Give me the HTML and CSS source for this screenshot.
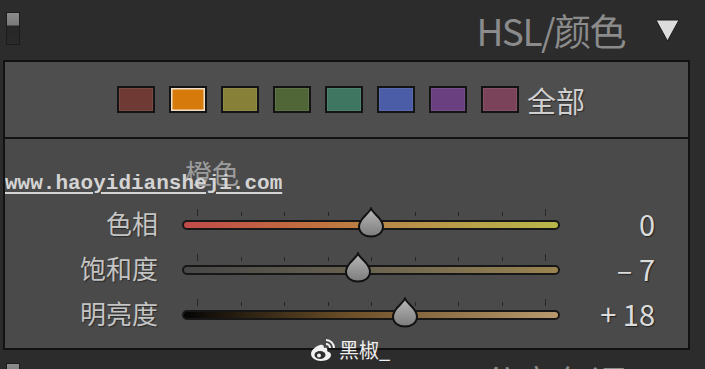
FILE: index.html
```html
<!DOCTYPE html>
<html lang="zh">
<head>
    <meta charset="UTF-8">
    <meta name="viewport" content="width=device-width, initial-scale=1.0">
    <title>HSL/颜色</title>
    <link rel="stylesheet" href="styles.css">
</head>
<body>

    <!-- Cabecera del panel -->
    <div class="cabecera">
        <span class="interruptor"></span>
        <h2 class="titulo">HSL/颜色</h2>
        <svg class="flecha" width="25" height="24" viewBox="0 0 25 24">
            <polygon points="1,2 24,2 12.5,23" fill="#dcdcdc" stroke="#1a1a1a" stroke-width="1"/>
        </svg>
    </div>

    <div class="panel">
        <!-- Selector de colores -->
        <div class="muestras">
            <span class="muestra" style="background:#6e3a33"></span>
            <span class="muestra activa" style="background:#d67a0c"></span>
            <span class="muestra" style="background:#878039"></span>
            <span class="muestra" style="background:#506636"></span>
            <span class="muestra" style="background:#3f7662"></span>
            <span class="muestra" style="background:#4b5da6"></span>
            <span class="muestra" style="background:#6a4081"></span>
            <span class="muestra" style="background:#7a4359"></span>
            <span class="todo">全部</span>
        </div>

        <!-- Ajustes del color elegido -->
        <div class="ajustes">
            <div class="grupo">橙色</div>
            <a class="marca" href="#">www.haoyidiansheji.com</a>

            <div class="fila">
                <span class="etiqueta">色相</span>
                <div class="deslizador">
                    <div class="marcas"><i></i><i></i><i></i><i></i><i></i><i></i><i></i><i></i><i></i></div>
                    <div class="pista tono"></div>
                    <svg class="tirador" style="left:50%" width="28" height="31" viewBox="0 0 28 31"><use href="#gota"/></svg>
                </div>
                <span class="valor">0</span>
            </div>
            <div class="fila">
                <span class="etiqueta">饱和度</span>
                <div class="deslizador">
                    <div class="marcas"><i></i><i></i><i></i><i></i><i></i><i></i><i></i><i></i><i></i></div>
                    <div class="pista saturacion"></div>
                    <svg class="tirador" style="left:46.5%" width="28" height="31" viewBox="0 0 28 31"><use href="#gota"/></svg>
                </div>
                <span class="valor">– 7</span>
            </div>
            <div class="fila">
                <span class="etiqueta">明亮度</span>
                <div class="deslizador">
                    <div class="marcas"><i></i><i></i><i></i><i></i><i></i><i></i><i></i><i></i><i></i></div>
                    <div class="pista luminancia"></div>
                    <svg class="tirador" style="left:59%" width="28" height="31" viewBox="0 0 28 31"><use href="#gota"/></svg>
                </div>
                <span class="valor">+ 18</span>
            </div>
        </div>

        <!-- Firma -->
        <div class="firma">
            <svg width="27" height="24" viewBox="0 0 27 24">
                <path d="M10 7 C4 9 1 13 1 16 C1 20 6 23 11 23 C17 23 21 20 21 17 C21 14 18 14 17 13 C18 11 17 9 14 10 C14 8 13 6 10 7 Z" fill="#f2f2f2"/>
                <ellipse cx="10" cy="17" rx="5.5" ry="4" fill="#2e2e2e"/>
                <circle cx="9" cy="17.5" r="2" fill="#f2f2f2"/>
                <path d="M16 6 A4 4 0 0 1 20 10" stroke="#f2f2f2" stroke-width="2" fill="none"/>
                <path d="M16 2 A8 8 0 0 1 24 10" stroke="#f2f2f2" stroke-width="2" fill="none"/>
            </svg>
            <span>黑椒_</span>
        </div>
    </div>

    <!-- Siguiente panel (cortado) -->
    <div class="cabecera siguiente">
        <span class="interruptor"></span>
        <h2 class="titulo">分离色调</h2>
    </div>

    <!-- Forma del tirador -->
    <svg width="0" height="0" class="oculto">
        <defs>
            <linearGradient id="gris" x1="0" y1="0" x2="0" y2="1">
                <stop offset="0" stop-color="#b8b8b8"/>
                <stop offset="1" stop-color="#7c7c7c"/>
            </linearGradient>
            <path id="gota" d="M14 1.5 C16 7 26 11 26 19.5 C26 26 20.5 29.5 14 29.5 C7.5 29.5 2 26 2 19.5 C2 11 12 7 14 1.5 Z" fill="url(#gris)" stroke="#111" stroke-width="2"/>
        </defs>
    </svg>

</body>
</html>
```

FILE: styles.css
```css
/* Estilos generales */
body {
    margin: 0;
    background-color: #2c2c2c;
    font-family: "Noto Sans CJK SC", "Noto Sans", sans-serif;
    height: 369px;
    overflow: hidden;
}
.oculto {
    position: absolute;
}
/* Cabecera */
.cabecera {
    height: 60px;
    display: flex;
    align-items: center;
    padding: 0 25px 0 6px;
}
.interruptor {
    width: 12px;
    height: 31px;
    border: 1px solid #1c1c1c;
    background: linear-gradient(#8c8c8c 0, #7a7a7a 12px, #262626 13px, #2a2a2a 100%);
    align-self: flex-start;
    margin-top: 12px;
}
.titulo {
    margin: 0 30px 0 auto;
    font-size: 37px;
    font-weight: normal;
    color: #8b8b8b;
    letter-spacing: -1.5px;
    line-height: 1;
}
.flecha {
    display: block;
}
/* Panel */
.panel {
    position: relative;
    width: 683px;
    margin-left: 3px;
    border: 2px solid #121212;
    background-color: #4a4a4a;
}
.muestras {
    display: flex;
    align-items: center;
    gap: 14px;
    height: 75px;
    padding-left: 112px;
    background-color: #4e4e4e;
    border-bottom: 2px solid #121212;
}
.muestra {
    width: 34px;
    height: 23px;
    border: 2px solid #141414;
    box-shadow: inset 0 0 0 1px rgba(255, 255, 255, 0.08);
}
.muestra.activa {
    box-shadow: inset 0 0 0 1.5px #f0e0c8;
}
.todo {
    margin-left: -6px;
    font-size: 29px;
    color: #cfcfcf;
    text-shadow: 1px 1px 1px #2a2a2a;
}
/* Ajustes */
.ajustes {
    position: relative;
    padding: 18px 0 13px;
}
.grupo {
    margin-left: 180px;
    font-size: 27px;
    line-height: 31px;
    color: #9c9c9c;
    margin-bottom: 12px;
}
.marca {
    position: absolute;
    left: 0;
    top: 33px;
    font-family: "Liberation Mono", monospace;
    font-size: 21px;
    font-weight: bold;
    color: #d4d4d4;
    text-decoration: underline;
    text-underline-offset: 3px;
}
.fila {
    display: flex;
    align-items: center;
    height: 45px;
}
.etiqueta {
    width: 153px;
    text-align: right;
    font-size: 26px;
    color: #c4c4c4;
    text-shadow: 1px 1px 1px #2a2a2a;
}
.deslizador {
    position: relative;
    width: 378px;
    height: 45px;
    margin-left: 24px;
}
.marcas {
    display: flex;
    justify-content: space-between;
    padding: 0 14px 0 15px;
    margin-top: 9px;
    height: 7px;
    align-items: flex-end;
}
.marcas i {
    width: 1px;
    height: 4px;
    background-color: #262626;
}
.marcas i:first-child,
.marcas i:last-child {
    height: 7px;
}
.pista {
    margin-top: 4px;
    height: 6px;
    border: 2px solid #171717;
    border-radius: 6px;
}
.tono {
    background: linear-gradient(to right, #c24a4a, #c0703e 35%, #b88a48 55%, #b8b84a);
}
.saturacion {
    background: linear-gradient(to right, #474747, #6a6350 50%, #9a8450);
}
.luminancia {
    background: linear-gradient(to right, #050505, #6e5028 45%, #b89a6e);
}
.tirador {
    position: absolute;
    top: 7px;
    margin-left: -14px;
}
.valor {
    width: 95px;
    text-align: right;
    font-size: 29px;
    color: #dcdcdc;
    text-shadow: 1px 1px 1px #222;
}
/* Firma */
.firma {
    position: absolute;
    left: 305px;
    bottom: -14px;
    display: flex;
    align-items: flex-end;
    gap: 2px;
    color: #f0f0f0;
    font-size: 20px;
    line-height: 24px;
}
/* Siguiente panel */
.siguiente {
    align-items: flex-start;
    height: auto;
}
.siguiente .interruptor {
    margin-top: 13px;
}
.siguiente .titulo {
    margin-top: 14px;
    margin-right: 55px;
}
```
